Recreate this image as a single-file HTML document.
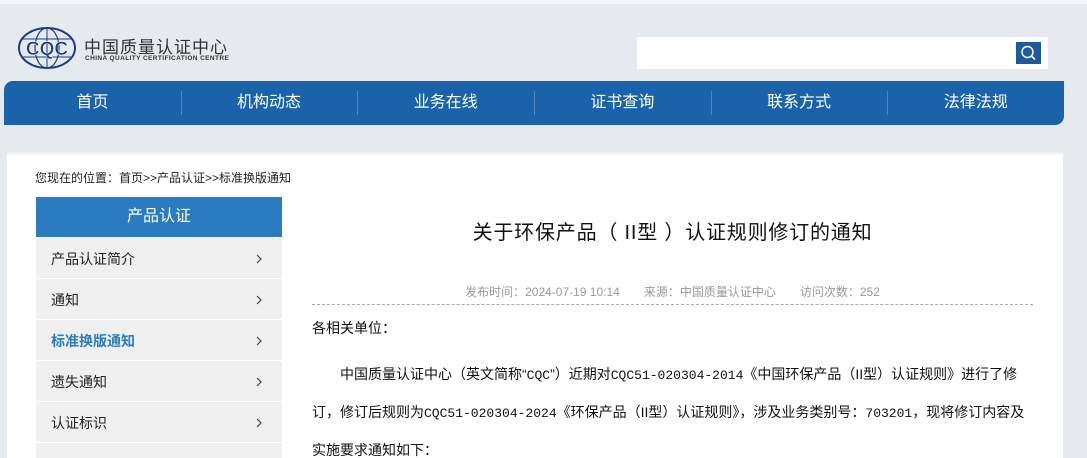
<!DOCTYPE html>
<html><head><meta charset="utf-8"><style>
*{margin:0;padding:0;box-sizing:border-box}
html,body{width:1087px;height:458px;overflow:hidden}
body{background:#e6e9ed;font-family:"Liberation Sans","Noto Sans CJK SC",sans-serif;position:relative}
.top{position:absolute;left:0;top:0;width:1087px;height:4px;background:#f3f4f5}
.nav{position:absolute;left:4px;top:81px;width:1060px;height:44px;background:#1a63ab;border-radius:9px 0 9px 0;display:flex}
.nav div{flex:1;color:#fff;font-size:16px;text-align:center;line-height:44px;position:relative}
.nav div+div:before{content:"";position:absolute;left:0;top:10px;height:24px;width:1px;background:#4f87c0}
.search{position:absolute;left:637px;top:37px;width:411px;height:32px;background:#fff}
.sbtn{position:absolute;left:1016px;top:42px;width:25px;height:22px;background:#1e5aa0}
.panel{position:absolute;left:7px;top:152px;width:1056px;height:306px;background:#fff;border-top:2px solid #eef0f2}
.crumb{position:absolute;left:35px;top:169px;font-size:12px;color:#222}
.side{position:absolute;left:36px;top:197px;width:246px;height:261px;overflow:hidden}
.sh{height:40px;background:#2a7bbf;color:#fff;font-size:16px;text-align:center;line-height:40px}
.si{height:41px;background:#efefef;border-top:1px solid #fff;font-size:14px;line-height:42px;padding-left:15px;color:#222;position:relative}
.si:first-of-type{border-top:0}
.si svg{position:absolute;right:20px;top:16px}
.si.act{color:#2a7bbf;font-weight:bold}
h1{position:absolute;left:312px;width:721px;top:216px;text-align:center;font-size:20px;font-weight:normal;color:#111;letter-spacing:0.8px}
.meta{position:absolute;left:312px;width:721px;top:283px;text-align:center;font-size:12px;color:#999}
.meta span{margin:0 12px}
.dash{position:absolute;left:312px;width:721px;top:304px;border-top:1px dashed #aaa}
.body{position:absolute;left:312px;width:725px;top:310px;font-size:14px;color:#111;line-height:36px}
.mono{font-family:"Liberation Mono",monospace;font-size:13px}
</style></head><body>
<div class="top"></div>
<svg style="position:absolute;left:18px;top:27px" width="60" height="42" viewBox="0 0 60 42"><ellipse cx="29" cy="21" rx="28" ry="20" fill="none" stroke="#1a3d8f" stroke-width="2"/><ellipse cx="29" cy="21" rx="12" ry="20" fill="none" stroke="#1a3d8f" stroke-width="1.2"/><line x1="3" y1="12" x2="55" y2="12" stroke="#1a3d8f"/><line x1="3" y1="30" x2="55" y2="30" stroke="#1a3d8f"/><line x1="29" y1="1" x2="29" y2="41" stroke="#1a3d8f"/><text x="29" y="28" text-anchor="middle" font-family="Liberation Sans" font-weight="bold" font-size="19" fill="#1a3d8f" stroke="#fff" stroke-width="0.5">CQC</text></svg>
<div style="position:absolute;left:84px;top:33px;font-size:17px;color:#333;letter-spacing:1px">中国质量认证中心</div>
<div style="position:absolute;left:85px;top:55px;font-size:6.5px;color:#333;font-weight:bold;letter-spacing:.4px">CHINA QUALITY CERTIFICATION CENTRE</div>
<div class="search"></div>
<div class="sbtn"><svg width="25" height="22"><circle cx="11.5" cy="10" r="5.5" fill="none" stroke="#fff" stroke-width="1.5"/><line x1="15.5" y1="14" x2="19" y2="17.5" stroke="#fff" stroke-width="1.6"/></svg></div>
<div class="nav"><div>首页</div><div>机构动态</div><div>业务在线</div><div>证书查询</div><div>联系方式</div><div>法律法规</div></div>
<div class="panel"></div>
<div class="crumb">您现在的位置：首页&gt;&gt;产品认证&gt;&gt;标准换版通知</div>
<div class="side"><div class="sh">产品认证</div>
<div class="si">产品认证简介<svg width="6" height="10"><path d="M1 1L5 5L1 9" fill="none" stroke="#444" stroke-width="1.2"/></svg></div>
<div class="si">通知<svg width="6" height="10"><path d="M1 1L5 5L1 9" fill="none" stroke="#444" stroke-width="1.2"/></svg></div>
<div class="si act">标准换版通知<svg width="6" height="10"><path d="M1 1L5 5L1 9" fill="none" stroke="#444" stroke-width="1.2"/></svg></div>
<div class="si">遗失通知<svg width="6" height="10"><path d="M1 1L5 5L1 9" fill="none" stroke="#444" stroke-width="1.2"/></svg></div>
<div class="si">认证标识<svg width="6" height="10"><path d="M1 1L5 5L1 9" fill="none" stroke="#444" stroke-width="1.2"/></svg></div>
<div class="si"></div></div>
<h1>关于环保产品（ II型 ）认证规则修订的通知</h1>
<div class="meta"><span>发布时间：2024-07-19 10:14</span><span>来源：中国质量认证中心</span><span>访问次数：252</span></div>
<div class="dash"></div>
<div class="body">各相关单位：<br><div style="height:10px"></div>
<span style="padding-left:28px">中国质量认证中心（英文简称“<span class="mono">CQC</span>”）近期对<span class="mono">CQC51-020304-2014</span>《中国环保产品（II型）认证规则》进行了修</span><br>订，修订后规则为<span class="mono">CQC51-020304-2024</span>《环保产品（II型）认证规则》，涉及业务类别号：<span class="mono">703201</span>，现将修订内容及<br>实施要求通知如下：</div>
</body></html>
